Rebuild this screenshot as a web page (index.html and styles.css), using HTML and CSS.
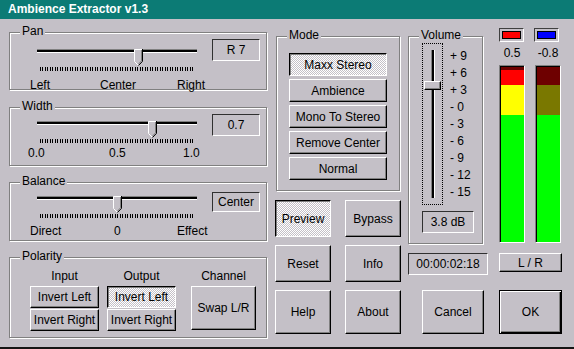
FILE: index.html
```html
<!DOCTYPE html>
<html>
<head>
    <title>Ambience Extractor v1.3</title>
    <link rel="stylesheet" href="styles.css">
</head>
<body>
<div class="window">
    <div class="titlebar">Ambience Extractor v1.3</div>

    <div class="client">
        <!-- left: sliders + polarity -->
        <div class="col-left">
            <div class="group pan">
                <span class="legend">Pan</span>
                <div class="slider-row">
                    <div class="slider-col">
                        <div class="hslider">
                            <div class="track"></div>
                            <svg class="thumb" style="left: 106px" width="9" height="17" viewBox="0 0 9 17">
                                <path d="M0 0H9V12L4.5 16.5L0 12Z" fill="#c4c0c7"/>
                                <path d="M0.5 12.5V0.5H8" fill="none" stroke="#fff"/>
                                <path d="M0.5 12.5L4.5 16.5" fill="none" stroke="#fff"/>
                                <path d="M8.5 0V12.3L4.5 16.5" fill="none" stroke="#000"/>
                                <path d="M7.5 1V11.8L4.5 15" fill="none" stroke="#808080"/>
                            </svg>
                        </div>
                        <div class="ticks"></div>
                        <div class="scale"><span>Left</span><span>Center</span><span>Right</span></div>
                    </div>
                    <div class="value">R 7</div>
                </div>
            </div>

            <div class="group width">
                <span class="legend">Width</span>
                <div class="slider-row">
                    <div class="slider-col">
                        <div class="hslider">
                            <div class="track"></div>
                            <svg class="thumb" style="left: 120px" width="9" height="17" viewBox="0 0 9 17">
                                <path d="M0 0H9V12L4.5 16.5L0 12Z" fill="#c4c0c7"/>
                                <path d="M0.5 12.5V0.5H8" fill="none" stroke="#fff"/>
                                <path d="M0.5 12.5L4.5 16.5" fill="none" stroke="#fff"/>
                                <path d="M8.5 0V12.3L4.5 16.5" fill="none" stroke="#000"/>
                                <path d="M7.5 1V11.8L4.5 15" fill="none" stroke="#808080"/>
                            </svg>
                        </div>
                        <div class="ticks"></div>
                        <div class="scale"><span>0.0</span><span>0.5</span><span>1.0</span></div>
                    </div>
                    <div class="value">0.7</div>
                </div>
            </div>

            <div class="group balance">
                <span class="legend">Balance</span>
                <div class="slider-row">
                    <div class="slider-col">
                        <div class="hslider">
                            <div class="track"></div>
                            <svg class="thumb" style="left: 85px" width="9" height="17" viewBox="0 0 9 17">
                                <path d="M0 0H9V12L4.5 16.5L0 12Z" fill="#c4c0c7"/>
                                <path d="M0.5 12.5V0.5H8" fill="none" stroke="#fff"/>
                                <path d="M0.5 12.5L4.5 16.5" fill="none" stroke="#fff"/>
                                <path d="M8.5 0V12.3L4.5 16.5" fill="none" stroke="#000"/>
                                <path d="M7.5 1V11.8L4.5 15" fill="none" stroke="#808080"/>
                            </svg>
                        </div>
                        <div class="ticks"></div>
                        <div class="scale"><span>Direct</span><span>0</span><span>Effect</span></div>
                    </div>
                    <div class="value">Center</div>
                </div>
            </div>

            <div class="group polarity">
                <span class="legend">Polarity</span>
                <div class="pcols">
                    <div class="pcol">
                        <div class="phead">Input</div>
                        <div class="btn half">Invert Left</div>
                        <div class="btn half">Invert Right</div>
                    </div>
                    <div class="pcol">
                        <div class="phead">Output</div>
                        <div class="btn half on">Invert Left</div>
                        <div class="btn half">Invert Right</div>
                    </div>
                    <div class="pcol chan">
                        <div class="phead">Channel</div>
                        <div class="btn swap">Swap L/R</div>
                    </div>
                </div>
            </div>
        </div>

        <!-- mode + action buttons -->
        <div class="col-mode">
            <div class="group mode">
                <span class="legend">Mode</span>
                <div class="btn on">Maxx Stereo</div>
                <div class="btn">Ambience</div>
                <div class="btn">Mono To Stereo</div>
                <div class="btn">Remove Center</div>
                <div class="btn">Normal</div>
            </div>
            <div class="actions">
                <div class="btn on">Preview</div>
                <div class="btn">Bypass</div>
                <div class="btn">Reset</div>
                <div class="btn">Info</div>
                <div class="btn">Help</div>
                <div class="btn">About</div>
            </div>
        </div>

        <!-- volume -->
        <div class="col-vol">
            <div class="group volume">
                <span class="legend">Volume</span>
                <div class="vrow">
                    <div class="vslider">
                        <div class="vtrack"></div>
                        <div class="vthumb"></div>
                    </div>
                    <div class="vscale">
                        <div>+ 9</div><div>+ 6</div><div>+ 3</div>
                        <div>- 0</div><div>- 3</div><div>- 6</div>
                        <div>- 9</div><div>- 12</div><div>- 15</div>
                    </div>
                </div>
                <div class="value vol">3.8 dB</div>
            </div>
            <div class="value time">00:00:02:18</div>
            <div class="btn cancel">Cancel</div>
        </div>

        <!-- meters -->
        <div class="col-meter">
            <div class="pair">
                <div class="led"><i class="red"></i></div>
                <div class="led"><i class="blue"></i></div>
            </div>
            <div class="pair peaks"><span>0.5</span><span>-0.8</span></div>
            <div class="pair meters">
                <div class="meter">
                    <div class="seg dark-red" style="height: 3px"></div>
                    <div class="seg red" style="height: 15px"></div>
                    <div class="seg yellow" style="height: 30px"></div>
                    <div class="seg green"></div>
                </div>
                <div class="meter">
                    <div class="seg dark-red" style="height: 18px"></div>
                    <div class="seg olive" style="height: 30px"></div>
                    <div class="seg green"></div>
                </div>
            </div>
            <div class="btn lr">L / R</div>
            <div class="btn ok">OK</div>
        </div>
    </div>
</div>
</body>
</html>
```

FILE: styles.css
```css
body { margin: 0; background: #c4c0c7; font-family: "Liberation Sans", Arial, sans-serif; font-size: 12px; line-height: 14px; color: #000; }
.window { width: 574px; height: 349px; box-sizing: border-box; border-bottom: 2px solid #141414; overflow: hidden; }
.titlebar { height: 19px; line-height: 19px; padding-left: 8px; background: #0c7b75; color: #fff; font-weight: bold; }
.client { display: flex; align-items: flex-start; }

/* etched group box */
.group { position: relative; box-sizing: border-box; border: 1px solid #808080; box-shadow: inset 1px 1px #fff, 1px 1px #fff; }
.legend { position: absolute; top: -9px; left: 10px; padding: 0 2px; background: #c4c0c7; }

/* buttons */
.btn { box-sizing: border-box; display: flex; align-items: center; justify-content: center; border: 1px solid; border-color: #fff #000 #000 #fff; box-shadow: inset -1px -1px #808080; background: #c4c0c7; white-space: nowrap; }
.btn.on { border-color: #000 #fff #fff #000; box-shadow: inset 1px 1px #808080; background: repeating-conic-gradient(#fff 0 25%, #c4c0c7 0 50%) 0 0 / 2px 2px; }

/* sunken readouts */
.value { box-sizing: border-box; display: flex; align-items: center; justify-content: center; border: 1px solid; border-color: #303030 #fff #fff #303030; }

/* left column */
.col-left { width: 258px; margin: 13px 0 0 9px; }
.pan { height: 58px; padding-left: 18px; }
.width { height: 59px; margin-top: 17px; padding-left: 18px; }
.balance { height: 59px; margin-top: 16px; padding-left: 18px; }
.polarity { height: 81px; margin-top: 16px; padding-left: 20px; }

.slider-row { display: flex; align-items: flex-start; }
.slider-col { width: 180px; }
.slider-row .value { width: 48px; height: 22px; margin-left: 4px; }
.hslider { position: relative; height: 17px; }
.track { margin: 5px 0 0 9px; width: 160px; height: 2px; background: #000; border-top: 1px solid #808080; border-bottom: 1px solid #fff; }
.thumb { position: absolute; top: 0; }
.ticks { margin: 1px 0 0 12px; width: 153px; height: 4px; background: repeating-linear-gradient(90deg, #000 0 1px, transparent 1px 2px, #000 2px 3px, transparent 3px 5px); }
.scale { display: grid; }
.scale span { white-space: nowrap; }

.pan .slider-col { margin-top: 11px; }
.pan .value { margin-top: 6px; }
.pan .scale { margin: 7px 0 0 2px; grid-template-columns: 70px 77px auto; }
.width .slider-col { margin-top: 8px; }
.width .value { margin-top: 6px; }
.width .scale { margin: 3px 0 0 0; grid-template-columns: 81px 74px auto; }
.balance .slider-col { margin-top: 8px; }
.balance .value { margin-top: 9px; height: 20px; }
.balance .scale { margin: 6px 0 0 2px; grid-template-columns: 84px 63px auto; }

.pcols { display: flex; margin-top: 11px; }
.pcol { width: 69px; }
.pcol + .pcol { margin-left: 8px; }
.pcol.chan { width: 65px; margin-left: 15px; }
.phead { text-align: center; margin-bottom: 3px; }
.btn.half { height: 22px; }
.btn.half + .btn.half { margin-top: 1px; }
.btn.swap { height: 44px; }

/* mode column */
.col-mode { width: 126px; margin: 17px 0 0 8px; }
.mode { width: 124px; height: 155px; margin-left: 1px; padding: 16px 0 0 12px; }
.mode .btn { width: 98px; height: 23px; margin-bottom: 3px; }
.actions { display: grid; grid-template-columns: 56px 56px; grid-template-rows: 37px 37px 44px; column-gap: 14px; row-gap: 8px; margin-top: 9px; }

/* volume column */
.col-vol { width: 80px; margin: 17px 0 0 7px; }
.volume { width: 75px; height: 208px; padding: 6px 0 0 13px; }
.vrow { display: flex; }
.vslider { position: relative; box-sizing: border-box; width: 21px; height: 162px; border: 1px dotted #000; }
.vtrack { margin: 6px 0 0 8px; width: 2px; height: 148px; background: #000; border-left: 1px solid #808080; border-right: 1px solid #fff; }
.vthumb { position: absolute; left: 1px; top: 37px; box-sizing: border-box; width: 17px; height: 9px; border: 1px solid; border-color: #fff #000 #000 #fff; box-shadow: inset -1px -1px #808080; background: #c4c0c7; }
.vscale { margin: 5px 0 0 7px; line-height: 17px; white-space: nowrap; }
.value.vol { width: 52px; height: 22px; margin-top: 6px; }
.value.time { width: 80px; height: 22px; margin-top: 9px; }
.btn.cancel { width: 62px; height: 44px; margin: 15px 0 0 14px; }

/* meter column */
.col-meter { width: 63px; margin: 9px 0 0 11px; }
.pair { display: flex; gap: 10px; }
.led { box-sizing: border-box; width: 25px; height: 14px; padding: 2px; border: 1px solid; border-color: #404040 #fff #fff #404040; }
.led i { display: block; height: 100%; box-sizing: border-box; border: 1px solid #000; }
.led .red { background: #ff0000; }
.led .blue { background: #0000ff; }
.peaks { margin-top: 4px; }
.peaks span { width: 26px; text-align: center; }
.meters { margin-top: 5px; }
.meter { box-sizing: border-box; display: flex; flex-direction: column; width: 26px; height: 178px; padding: 1px 0 0 1px; border: 1px solid; border-color: #808080 #fff #fff #808080; box-shadow: inset 1px 1px #000; }
.seg { flex: none; }
.seg.green { flex: 1; background: #00ff00; }
.seg.red { background: #ff0000; }
.seg.yellow { background: #ffff00; }
.seg.dark-red { background: #6e0000; }
.seg.olive { background: #7a7800; }
.btn.lr { width: 63px; height: 19px; margin-top: 10px; }
.btn.ok { width: 63px; height: 44px; margin-top: 18px; border-color: #000; box-shadow: inset 1px 1px #fff, inset -1px -1px #000, inset -2px -2px #808080; }
```
